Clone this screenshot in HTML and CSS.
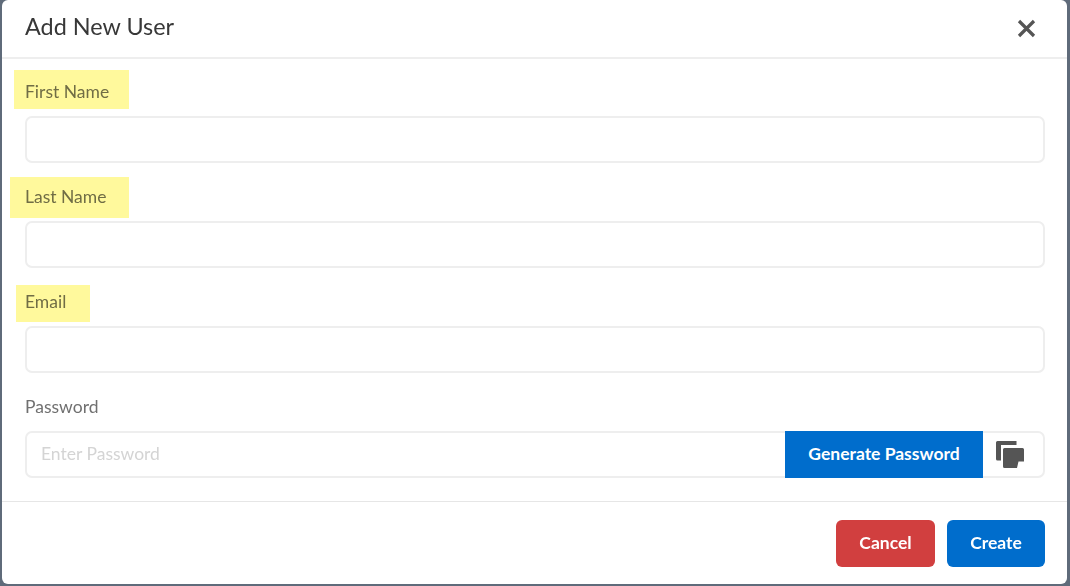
FILE: index.html
```html
<!DOCTYPE html>
<html lang="en">
<head>
  <meta charset="UTF-8">
  <meta name="viewport" content="width=device-width, initial-scale=1.0">
  <title>Add New User</title>
  <link rel="stylesheet" href="styles.css">
</head>
<body>
  <div class="modal">
    <div class="modal-header">
      <h1>Add New User</h1>
      <button class="close-button" aria-label="Close">
        <svg width="19" height="19" viewBox="0 0 19 19"><path d="M2 2L17 17M17 2L2 17" stroke="#555" stroke-width="3.2" fill="none"/></svg>
      </button>
    </div>
    <div class="modal-body">
      <div class="field">
        <label>First Name</label>
        <input type="text" class="text-input">
        <span class="highlight highlight-first"></span>
      </div>
      <div class="field">
        <label>Last Name</label>
        <input type="text" class="text-input">
        <span class="highlight highlight-last"></span>
      </div>
      <div class="field">
        <label>Email</label>
        <input type="text" class="text-input">
        <span class="highlight highlight-email"></span>
      </div>
      <div class="field">
        <label>Password</label>
        <div class="password-group">
          <input type="text" class="password-input" placeholder="Enter Password">
          <button class="generate-button">Generate Password</button>
          <button class="copy-button" aria-label="Copy">
            <svg width="28" height="27" viewBox="0 0 28 27"><path d="M1.500 0H20.500V4H5V19.500H1.500A1.500 1.500 0 0 1 0 18V1.500A1.500 1.500 0 0 1 1.500 0Z" fill="#555"/><path d="M8.500 7H26.500A1.500 1.500 0 0 1 28 8.500V20.500H22.500L21 27H8.500A1.500 1.500 0 0 1 7 25.500V8.500A1.500 1.500 0 0 1 8.500 7Z" fill="#555"/></svg>
          </button>
        </div>
      </div>
    </div>
    <div class="modal-footer">
      <button class="btn btn-cancel">Cancel</button>
      <button class="btn btn-create">Create</button>
    </div>
  </div>
</body>
</html>
```

FILE: styles.css
```css
* {
  box-sizing: border-box;
}
body {
  margin: 0;
  height: 586px;
  overflow: hidden;
  background-color: #5f6b7a;
  font-family: Lato, "Open Sans", sans-serif;
}
.modal {
  width: 1065px;
  height: 584px;
  margin-left: 2px;
  background: #fff;
  border-radius: 6px;
  display: flex;
  flex-direction: column;
}
.modal-header {
  height: 59px;
  padding: 0 31px 6px 23px;
  display: flex;
  justify-content: space-between;
  align-items: center;
  border-bottom: 2px solid #eeeeee;
}
.modal-header h1 {
  margin: 0;
  font-size: 23.4px;
  font-weight: 400;
  color: #383838;
}
.close-button {
  border: none;
  background: none;
  padding: 0;
  margin-top: 6px;
  display: flex;
  cursor: pointer;
}
.modal-body {
  padding: 0 22px 0 23px;
  height: 443px;
  border-bottom: 1px solid #e6e6e6;
}
.field {
  position: relative;
  height: 105px;
  padding-top: 21px;
}
.field label {
  display: block;
  height: 36px;
  line-height: 23px;
  font-size: 17.5px;
  color: #707070;
}
.text-input {
  display: block;
  width: 100%;
  height: 47px;
  border: 2px solid #eeeeee;
  border-radius: 7px;
  outline: none;
}
.highlight {
  position: absolute;
  background: #fff99c;
  mix-blend-mode: multiply;
}
.highlight-first {
  left: -11px;
  top: 11px;
  width: 115px;
  height: 39px;
}
.highlight-last {
  left: -15px;
  top: 13px;
  width: 119px;
  height: 41px;
}
.highlight-email {
  left: -9px;
  top: 16px;
  width: 74px;
  height: 37px;
}
.password-group {
  display: flex;
  height: 47px;
  border: 2px solid #eeeeee;
  border-radius: 7px;
}
.password-input {
  flex: 1;
  min-width: 0;
  border: none;
  outline: none;
  background: none;
  padding: 0 14px 2px;
  font-family: inherit;
  font-size: 17.5px;
}
.password-input::placeholder {
  color: #d4d4d4;
  opacity: 1;
}
.generate-button {
  width: 198px;
  margin: -2px 0;
  padding: 0 0 2px;
  border: none;
  background-color: #006dcc;
  color: #fff;
  font-family: inherit;
  font-size: 17.5px;
  font-weight: 700;
  cursor: pointer;
}
.copy-button {
  width: 60px;
  border: none;
  background: none;
  padding: 0 0 0 13px;
  display: flex;
  align-items: center;
  cursor: pointer;
}
.modal-footer {
  flex: 1;
  padding: 18px 22px 0 0;
  display: flex;
  justify-content: flex-end;
  gap: 12px;
}
.btn {
  height: 47px;
  padding: 0 0 2px;
  border: none;
  border-radius: 6px;
  color: #fff;
  font-family: inherit;
  font-size: 17.5px;
  font-weight: 700;
  cursor: pointer;
}
.btn-cancel {
  width: 99px;
  background-color: #d13f3f;
}
.btn-create {
  width: 98px;
  background-color: #006dcc;
}
```
